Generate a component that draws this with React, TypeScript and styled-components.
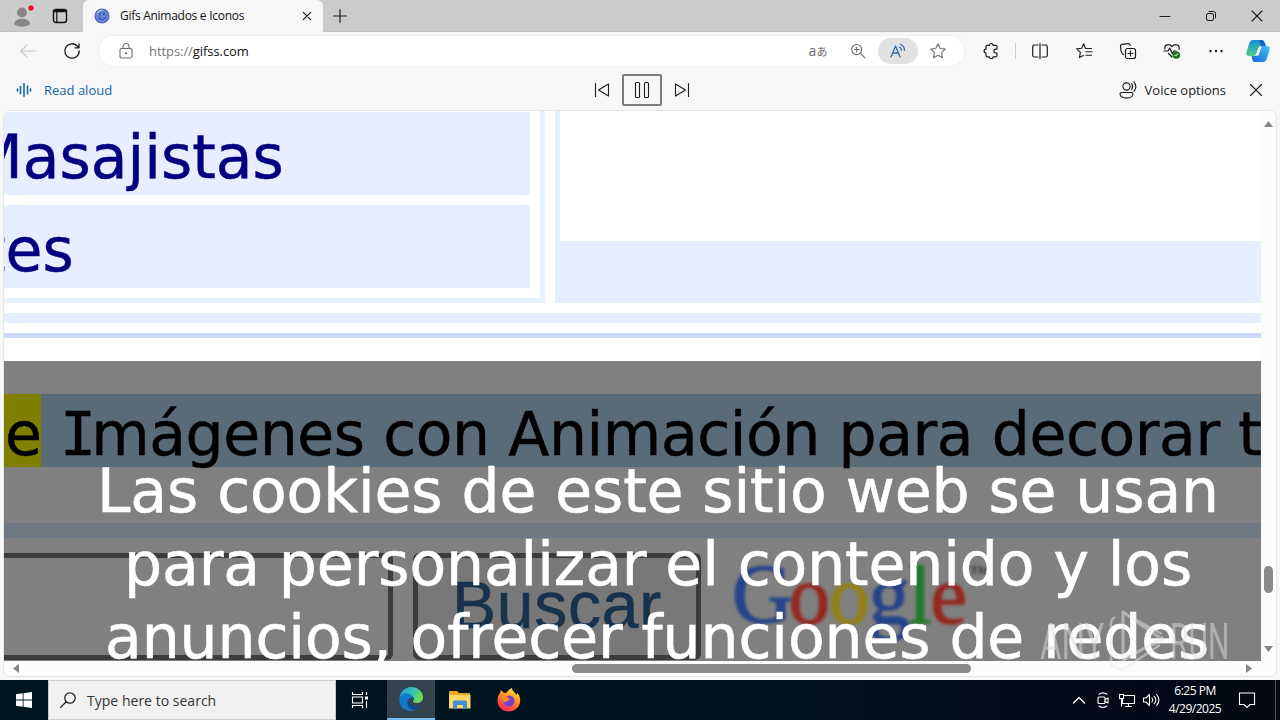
import type { ReactNode } from "react";
import styled, { createGlobalStyle } from "styled-components";

const GlobalStyle = createGlobalStyle`
  html, body {
    margin: 0;
    background: #f7f7f7;
    overflow: hidden;
  }
  * { box-sizing: border-box; }
  svg { display: block; flex: none; overflow: visible; }
`;

const ui = `"Open Sans", "Noto Sans", sans-serif`;
const verdana = `"DejaVu Sans", Verdana, sans-serif`;

const Desktop = styled.div`
  width: 1280px;
  height: 720px;
  display: flex;
  flex-direction: column;
  overflow: hidden;
  background: #f7f7f7;
  font-family: ${ui};
  color: #111;
`;

const Slot = styled.div<{ $w: number }>`
  width: ${(p) => p.$w}px;
  height: 100%;
  display: flex;
  align-items: center;
  justify-content: center;
  flex: none;
`;

const Spacer = styled.div`
  flex: 1;
`;

/* title bar */

const TitleBar = styled.div`
  height: 32px;
  display: flex;
  flex: none;
  background: #cbcbcb;
  border-bottom: 1px solid #c2c2c2;
`;

const Tab = styled.div`
  width: 240px;
  height: 32px;
  padding-left: 11px;
  display: flex;
  align-items: center;
  background: #f7f7f7;
  border-radius: 6px 6px 0 0;
`;

const TabTitle = styled.div`
  margin-left: 10px;
  flex: 1;
  font-size: 12px;
  line-height: 16px;
  letter-spacing: -0.28px;
  white-space: nowrap;
`;

/* toolbar */

const Toolbar = styled.div`
  height: 38px;
  padding-left: 6px;
  display: flex;
  align-items: center;
  flex: none;
`;

const AddressBar = styled.div`
  width: 865px;
  height: 30px;
  margin: 0 5px;
  padding: 0 6px 0 7px;
  display: flex;
  align-items: center;
  background: #fff;
  border-radius: 15px;
  box-shadow: 0 0 2px 1px #f0f0f0;
`;

const Url = styled.div`
  margin-left: 3px;
  font-size: 13px;
  letter-spacing: -0.07px;
  color: #111;
  span {
    color: #757575;
  }
`;

const Translate = styled.div`
  font: 14px/14px ${ui};
  color: #6a6a6a;
  display: flex;
  align-items: baseline;
  span {
    font: 11px/14px "Noto Sans CJK JP", sans-serif;
  }
`;

const Pill = styled.div`
  width: 40px;
  height: 26px;
  border-radius: 13px;
  background: #e1e1e1;
  display: flex;
  align-items: center;
  justify-content: center;
`;

const Divider = styled.div`
  width: 1px;
  height: 16px;
  margin: 0 2px;
  background: #cfcfcf;
`;

/* read aloud bar */

const ReadAloud = styled.div`
  height: 40px;
  display: grid;
  grid-template-columns: 582px 120px 1fr;
  align-items: center;
  flex: none;
`;

const BarGroup = styled.div<{ $end?: boolean }>`
  height: 40px;
  display: flex;
  align-items: center;
  justify-content: ${(p) => (p.$end ? "flex-end" : "flex-start")};
`;

const BarLabel = styled.div<{ $color: string }>`
  font-size: 13px;
  white-space: nowrap;
  color: ${(p) => p.$color};
`;

const PauseButton = styled.div`
  width: 40px;
  height: 32px;
  border: 2px solid #7c7c7c;
  border-radius: 2px;
  display: flex;
  align-items: center;
  justify-content: center;
`;

/* browser viewport */

const Frame = styled.div`
  width: 1274px;
  height: 567px;
  margin-left: 3px;
  display: grid;
  grid-template-columns: 1257px 15px;
  grid-template-rows: 550px 15px;
  border: 1px solid #e6e6e6;
  border-radius: 7px;
  background: #fcfcfc;
  overflow: hidden;
  flex: none;
`;

const Page = styled.div`
  position: relative;
  height: 550px;
  background: #fff;
  overflow: hidden;
  display: flex;
  flex-direction: column;
  font-family: ${verdana};
`;

const Columns = styled.div`
  height: 192px;
  display: flex;
  flex: none;
`;

const Links = styled.div`
  width: 541px;
  padding: 1px 10px 10px 0;
  display: flex;
  flex-direction: column;
  gap: 10px;
  border: solid #e6f0ff;
  border-width: 0 5px 5px 0;
`;

const LinkCell = styled.div<{ $indent: number }>`
  flex: 1;
  background: #e6eeff;
  color: #000080;
  font-size: 60px;
  line-height: 91px;
  text-indent: ${(p) => p.$indent}px;
  -webkit-text-stroke: 0.5px #000080;
  white-space: nowrap;
  overflow: hidden;
`;

const AdBox = styled.div`
  flex: 1;
  margin-left: 10px;
  padding: 0 0 62px 5px;
  background: #e6eeff;
`;

const AdBlank = styled.div`
  height: 130px;
  background: #fff;
`;

const Rule = styled.div<{ $h: number; $top: number; $color: string }>`
  height: ${(p) => p.$h}px;
  margin-top: ${(p) => p.$top}px;
  flex: none;
  background: ${(p) => p.$color};
`;

const Dimmed = styled.div`
  height: 300px;
  margin-top: 23px;
  padding-top: 33px;
  background: #808080;
  flex: none;
`;

const Sentence = styled.div`
  height: 73px;
  display: flex;
  background: #5a6b78;
  color: #000;
  font-size: 60px;
  line-height: 80px;
  white-space: pre;
  -webkit-text-stroke: 0.5px #000;
`;

const Word = styled.div`
  width: 37px;
  padding-left: 1px;
  background: #808000;
`;

const Phrase = styled.div`
  padding-left: 21px;
  letter-spacing: -0.42px;
`;

const SerifI = styled.span`
  font-family: "DejaVu Sans Mono", monospace;
  margin: 0 -3px 0 -2px;
  letter-spacing: -2px;
`;

const SearchForm = styled.div`
  height: 107px;
  margin-top: 15px;
  display: flex;
`;

const Field = styled.div`
  width: 389px;
  height: 107px;
  border: 5px solid #3c3c3c;
  border-left: 0;
  border-radius: 0 6px 6px 0;
`;

const SubmitButton = styled.div`
  width: 288px;
  height: 107px;
  margin-left: 20px;
  border: 5px solid #3c3c3c;
  border-radius: 6px;
  background: #787878;
  color: #17324d;
  font: 66px/95px "Liberation Sans", Arial, sans-serif;
  letter-spacing: 0.8px;
  text-align: center;
  -webkit-text-stroke: 0.6px #17324d;
`;

const Logo = styled.div`
  margin-left: 31px;
  display: flex;
  align-items: baseline;
  line-height: 83px;
  font-family: "Liberation Serif", serif;
  filter: blur(1.7px);
`;

const LogoLetter = styled.span<{ $color: string; $size?: number; $ls?: number }>`
  color: ${(p) => p.$color};
  -webkit-text-stroke: 1.5px ${(p) => p.$color};
  font-size: ${(p) => p.$size ?? 82}px;
  letter-spacing: ${(p) => p.$ls ?? -1}px;
`;

const LogoMark = styled.span`
  margin: -20px 0 0 3px;
  align-self: flex-start;
  color: #404040;
  font: bold 24px/83px "Liberation Sans", sans-serif;
`;

const CookieNotice = styled.div`
  position: absolute;
  left: 0;
  right: 0;
  top: 344px;
  color: #fff;
  font-size: 60px;
  -webkit-text-stroke: 0.6px #fff;
`;

const NoticeLine = styled.div<{ $left: number }>`
  height: 73px;
  line-height: 73px;
  padding-left: ${(p) => p.$left}px;
  letter-spacing: -0.1px;
  white-space: nowrap;
`;

const VScroll = styled.div`
  display: flex;
  flex-direction: column;
  align-items: center;
  padding: 10px 0 9px;
`;

const HScroll = styled.div`
  display: flex;
  align-items: center;
  padding: 0 9px;
`;

const Thumb = styled.div<{ $w: number; $h: number }>`
  width: ${(p) => p.$w}px;
  height: ${(p) => p.$h}px;
  border-radius: 5px;
  background: #8a8a8a;
`;

const Gap = styled.div<{ $size: number }>`
  flex: 0 0 ${(p) => p.$size}px;
`;

const Watermark = styled.div`
  position: absolute;
  left: 1040px;
  top: 608px;
  opacity: 0.5;
`;

/* taskbar */

const Taskbar = styled.div`
  height: 40px;
  margin-top: 3px;
  display: flex;
  flex: none;
  background: linear-gradient(90deg, #001722, #00121f 60%, #040714);
  color: #fff;
`;

const SearchBox = styled.div`
  width: 288px;
  height: 40px;
  padding-left: 11px;
  display: flex;
  align-items: center;
  gap: 11px;
  background: #f1f1f1;
  border: 1px solid #c8c8c8;
  color: #333;
  font-size: 14px;
  letter-spacing: 0.02px;
`;

const ActiveApp = styled.div`
  width: 48px;
  height: 40px;
  margin-left: 3px;
  display: flex;
  align-items: center;
  justify-content: center;
  background: #33444e;
  border-bottom: 2px solid #76b9ed;
`;

const Clock = styled.div`
  width: 64px;
  padding-top: 2px;
  font-size: 12px;
  line-height: 18px;
  letter-spacing: -0.5px;
  text-align: center;
  white-space: nowrap;
`;

const ShowDesktop = styled.div`
  width: 5px;
  height: 40px;
  border-left: 1px solid #4c5660;
`;

type IconProps = {
  w?: number;
  h?: number;
  color?: string;
  sw?: number;
  children: ReactNode;
};

function Icon({ w = 16, h = 16, color = "#1b1b1b", sw = 1.1, children }: IconProps) {
  return (
    <svg
      width={w}
      height={h}
      viewBox={`0 0 ${w} ${h}`}
      fill="none"
      stroke={color}
      strokeWidth={sw}
      strokeLinecap="round"
      strokeLinejoin="round"
    >
      {children}
    </svg>
  );
}

function Arrow({ d, w, h }: { d: string; w: number; h: number }) {
  return (
    <svg width={w} height={h}>
      <path d={d} fill="#858585" />
    </svg>
  );
}

function BrowserTitle() {
  return (
    <TitleBar>
      <Slot $w={44}>
        <Icon w={24} h={24}>
          <circle cx="12" cy="12" r="11" fill="#d0cecd" stroke="none" />
          <circle cx="12" cy="8.5" r="5" fill="#898785" stroke="none" />
          <path d="M4 20c0-7 16-7 16 0-4 3.500-12 3.500-16 0z" fill="#898785" stroke="none" />
          <circle cx="21" cy="4" r="3.300" fill="#e81123" stroke="#d8d8d8" />
        </Icon>
      </Slot>
      <Slot $w={32}>
        <Icon sw={1.4} color="#111">
          <rect x="1.500" y="1.500" width="13" height="13" rx="2.500" />
          <path d="M2 3h12" strokeWidth="2.600" />
          <path d="M4.800 4v10" strokeWidth="1.200" />
        </Icon>
      </Slot>
      <Gap $size={7} />
      <Tab>
        <Icon color="#2b3f9a">
          <circle cx="8" cy="8" r="7" fill="#6686d4" stroke="#4a5fae" />
          <path d="M5.800 5v2M10 5v2M4.500 9.500c2 3 5 3 7 0" />
          <path d="M3.500 5c1-2 3-3 5-3" stroke="#b8cbf5" />
        </Icon>
        <TabTitle>Gifs Animados e Iconos</TabTitle>
        <Slot $w={32}>
          <Icon w={8} h={8} sw={1.2}>
            <path d="M.300.300l7.400 7.400M7.700.300L.300 7.700" />
          </Icon>
        </Slot>
      </Tab>
      <Slot $w={34}>
        <Icon w={14} h={14} sw={1.2}>
          <path d="M7 .500v13M.500 7h13" />
        </Icon>
      </Slot>
      <Spacer />
      <Slot $w={46}>
        <Icon w={10} h={10} sw={1}>
          <path d="M0 5.500h10" />
        </Icon>
      </Slot>
      <Slot $w={46}>
        <Icon w={10} h={10} sw={1}>
          <rect x=".500" y="2.500" width="7" height="7" rx="1.500" />
          <path d="M3 .500h4.500a2 2 0 0 1 2 2V7" />
        </Icon>
      </Slot>
      <Slot $w={46}>
        <Icon w={10} h={10} sw={1.1}>
          <path d="M0 0l10 10M10 0L0 10" />
        </Icon>
      </Slot>
    </TitleBar>
  );
}

function BrowserToolbar() {
  return (
    <Toolbar>
      <Slot $w={44}>
        <Icon color="#c9c9c9">
          <path d="M15.500 8H.800M7 1.800L.800 8 7 14.200" />
        </Icon>
      </Slot>
      <Slot $w={44}>
        <Icon sw={1.3}>
          <path d="M15.200 8a7.200 7.200 0 1 1-2-5l1.500 1.600M15 .800v4h-4" />
        </Icon>
      </Slot>
      <AddressBar>
        <Slot $w={40}>
          <Icon color="#6e6e6e">
            <rect x="2" y="5.500" width="12" height="9.500" rx="1.500" />
            <path d="M5 5.500V3.500a3 3 0 0 1 6 0v2" />
            <circle cx="8" cy="10.300" r=".600" fill="#6e6e6e" />
          </Icon>
        </Slot>
        <Url>
          <span>https://</span>gifss.com
        </Url>
        <Spacer />
        <Slot $w={40}>
          <Translate>
            a<span>あ</span>
          </Translate>
        </Slot>
        <Slot $w={40}>
          <Icon color="#6e6e6e">
            <circle cx="6.700" cy="6.500" r="5" />
            <path d="M10.500 10.300l4.500 4.500M6.700 4v5M4.200 6.500h5" />
          </Icon>
        </Slot>
        <Pill>
          <Icon color="#2a6cae" sw={1.3}>
            <path d="M1 14L5.500 3 10 14M2.600 10h5.800" />
            <path d="M9.500 4.200c1.200.600 1.900 1.700 1.900 3M10.500 1.500c2.500 1 4 3.200 4 5.800" />
          </Icon>
        </Pill>
        <Slot $w={40}>
          <Icon color="#6e6e6e">
            <path d="M8 .800l2.200 4.700 5.100.600-3.800 3.500 1 5.100L8 12.200l-4.500 2.500 1-5.100L.700 6.100l5.100-.600z" />
          </Icon>
        </Slot>
      </AddressBar>
      <Slot $w={44}>
        <Icon sw={1.2}>
          <path d="M4.500 2.300h2a1.800 1.800 0 0 1 3.600 0h2.400q1.500 0 1.500 1.500v2.400h-1.200a1.900 1.900 0 0 0 0 3.800H14v2.400q0 1.500-1.500 1.500h-2.400a1.800 1.800 0 0 1-3.600 0h-2Q3 13.900 3 12.400V10a1.900 1.900 0 0 1 0-3.800V3.800q0-1.500 1.500-1.500z" />
        </Icon>
      </Slot>
      <Divider />
      <Slot $w={44}>
        <Icon sw={1.2}>
          <path d="M6 2H2.500Q.700 2 .700 3.800v8.400Q.700 14 2.500 14H6M10 2h3.500q1.800 0 1.800 1.800v8.400q0 1.800-1.800 1.800H10M8 .500v15" />
        </Icon>
      </Slot>
      <Slot $w={44}>
        <Icon sw={1.1}>
          <path d="M9.500 5.500L7.700.800 5.700 5.300l-5 .600 3.700 3.500-1 5.200 4-2.200M9.500 5.500H15.500M10 8.800h6M10 12.200h5.500" />
        </Icon>
      </Slot>
      <Slot $w={44}>
        <Icon sw={1.2}>
          <rect x="5.500" y="5.500" width="10" height="10" rx="2" />
          <path d="M10.500 8v5M8 10.500h5M3.500 11.500L2.600 11Q1 9 .800 7L.500 3Q.500 1.500 2 1.300L8 .600q1.800-.200 2.200 1.800" />
        </Icon>
      </Slot>
      <Slot $w={44}>
        <Icon sw={1.2}>
          <path d="M8 14L4.500 10.500M1 6C-.200 2 5 0 8 3.500 11 0 16.500 2 15 6.500M0 8h4l1.700-3 2.600 5.500L10 8h2" />
          <circle cx="12.300" cy="12" r="3.800" fill="#187a1b" stroke="none" />
          <path d="M10.700 12l1 1.100 2.200-2.300" stroke="#fff" strokeWidth="1" />
        </Icon>
      </Slot>
      <Slot $w={44}>
        <Icon>
          <g fill="#1b1b1b" stroke="none">
            <circle cx="2.500" cy="8" r="1.200" />
            <circle cx="8" cy="8" r="1.200" />
            <circle cx="13.500" cy="8" r="1.200" />
          </g>
        </Icon>
      </Slot>
      <Slot $w={40}>
        <CopilotLogo />
      </Slot>
    </Toolbar>
  );
}

function CopilotLogo() {
  return (
    <svg width="24" height="22" viewBox="0 0 24 22">
      <defs>
        <linearGradient id="cpA" x1="0" y1="0" x2="0" y2="1">
          <stop offset="0" stopColor="#1a8ed8" />
          <stop offset="1" stopColor="#53d08c" />
        </linearGradient>
        <linearGradient id="cpB" x1="1" y1="0" x2="0" y2="1">
          <stop offset="0" stopColor="#3cc8f2" />
          <stop offset="1" stopColor="#1a63e0" />
        </linearGradient>
      </defs>
      <path d="M7 0h8q2 0 2.700 2.500L18.500 6H15q-2 0-2.700 2l-2 6q-.800 2-2.800 2H3Q-.500 16 .500 12L3 4Q4 0 7 0z" fill="url(#cpA)" />
      <path d="M13 0h3q2 0 2.700 2.500L20 6h-5z" fill="#1661be" />
      <path d="M17 22H9q-2 0-2.700-2.500L5.500 16H9q2 0 2.700-2l2-6q.800-2 2.800-2H21q3.500 0 2.500 4L21 18q-1 4-4 4z" fill="url(#cpB)" />
      <path d="M13.500 7h2l-3 8.500h-3z" fill="#f2f8fb" />
    </svg>
  );
}

function ReadAloudBar() {
  return (
    <ReadAloud>
      <BarGroup>
        <Gap $size={4} />
        <Slot $w={40}>
          <Icon color="#1464a5" sw={1.6}>
            <path d="M1.500 7v2M4.500 4.500v7M8 1.800v12.400M11.500 4v8M14.500 7v2" />
          </Icon>
        </Slot>
        <BarLabel $color="#1464a5">Read aloud</BarLabel>
      </BarGroup>
      <BarGroup>
        <Slot $w={40}>
          <Icon>
            <path d="M1.500 1.500v13M14.500 2v12L4.500 8z" />
          </Icon>
        </Slot>
        <PauseButton>
          <Icon>
            <rect x="1.500" y=".500" width="4" height="15" rx="1" />
            <rect x="10.500" y=".500" width="4" height="15" rx="1" />
          </Icon>
        </PauseButton>
        <Slot $w={40}>
          <Icon>
            <path d="M14.500 1.500v13M1.500 2v12l10-6z" />
          </Icon>
        </Slot>
      </BarGroup>
      <BarGroup $end>
        <Icon w={18} h={18}>
          <circle cx="7.500" cy="5.500" r="3.600" />
          <path d="M2.500 11.500h10q1.500 0 1.500 1.500c0 5.500-13 5.500-13 0q0-1.500 1.500-1.500zM12.700 2.500c1.300 2 1.300 4 0 6M15 .800c2.300 3 2.300 6.500 0 9.500" />
        </Icon>
        <Gap $size={8} />
        <BarLabel $color="#222">Voice options</BarLabel>
        <Gap $size={6} />
        <Slot $w={48}>
          <Icon w={12} h={12}>
            <path d="M.500.500l11 11M11.500.500l-11 11" />
          </Icon>
        </Slot>
      </BarGroup>
    </ReadAloud>
  );
}

const notice = [
  { text: "Las cookies de este sitio web se usan", left: 93 },
  { text: "para personalizar el contenido y los", left: 120 },
  { text: "anuncios, ofrecer funciones de redes", left: 101 },
];

function WebPage() {
  return (
    <Page>
      <Columns>
        <Links>
          <LinkCell $indent={-33}>Masajistas</LinkCell>
          <LinkCell $indent={-22}>tes</LinkCell>
        </Links>
        <AdBox>
          <AdBlank />
        </AdBox>
      </Columns>
      <Rule $h={10} $top={10} $color="#e6eeff" />
      <Rule $h={5} $top={10} $color="#ccd9fa" />
      <Dimmed>
        <Sentence>
          <Word>e</Word>
          <Phrase>
            <SerifI>I</SerifI>mágenes con Animación para decorar tu
          </Phrase>
        </Sentence>
        <Rule $h={15} $top={56} $color="#6f7883" />
        <SearchForm>
          <Field />
          <SubmitButton>Buscar</SubmitButton>
          <Logo>
            <LogoLetter $color="#24438a" $size={84} $ls={-4}>G</LogoLetter>
            <LogoLetter $color="#93291f">o</LogoLetter>
            <LogoLetter $color="#94801a">o</LogoLetter>
            <LogoLetter $color="#24438a">g</LogoLetter>
            <LogoLetter $color="#1f7a2b">l</LogoLetter>
            <LogoLetter $color="#93291f">e</LogoLetter>
            <LogoMark>™</LogoMark>
          </Logo>
        </SearchForm>
      </Dimmed>
      <CookieNotice>
        {notice.map((line) => (
          <NoticeLine key={line.text} $left={line.left}>
            {line.text}
          </NoticeLine>
        ))}
      </CookieNotice>
    </Page>
  );
}

function AnyRun() {
  return (
    <Watermark>
      <svg width="195" height="66" viewBox="0 0 195 66" fill="#dedede">
        <g fontFamily="Roboto, sans-serif" fontSize="50" fontWeight="400">
          <text transform="translate(0 51) scale(0.66 1)">ANY</text>
          <text transform="translate(130 51) scale(0.6 1)">RUN</text>
        </g>
        <g fill="none" stroke="#e8e8e8" strokeWidth="3" strokeLinejoin="round">
          <path d="M83 4v46l40-18z" />
          <path d="M75 9q-4 2-4 7v41l11 5 38-25M82 4l40 22M81 54l42-25" strokeWidth="2.500" />
        </g>
      </svg>
    </Watermark>
  );
}

function WindowsTaskbar() {
  return (
    <Taskbar>
      <Slot $w={48}>
        <Icon>
          <path
            d="M0 2.300l6.700-1v6.200H0zM7.500 1.200L16 0v7.500H7.500zM0 8.400h6.700v6.300L0 13.700zM7.500 8.400H16V16l-8.500-1.200z"
            fill="#fff"
            stroke="none"
          />
        </Icon>
      </Slot>
      <SearchBox>
        <Icon color="#222" sw={1.3}>
          <circle cx="10" cy="6" r="5.200" />
          <path d="M6.200 9.800L.600 15.400" />
        </Icon>
        Type here to search
      </SearchBox>
      <Slot $w={48}>
        <Icon color="#fff" sw={1.1}>
          <path d="M.500 0v2.500h10V0M.500 16v-2.500h10V16M.500 5h10v6H.500zM14.500 0v3M14.500 9v7" strokeLinecap="butt" strokeLinejoin="miter" />
          <path d="M14.500 4.500v3" strokeWidth="3" strokeLinecap="butt" />
        </Icon>
      </Slot>
      <ActiveApp>
        <svg width="24" height="24" viewBox="0 0 24 24">
          <defs>
            <linearGradient id="edgeTop" x1="0" y1="0" x2="1" y2="0.300">
              <stop offset="0" stopColor="#239bd8" />
              <stop offset="0.600" stopColor="#35c1b5" />
              <stop offset="1" stopColor="#6bdd54" />
            </linearGradient>
          </defs>
          <path d="M.500 11C1 5 6 0 12 0c7 0 12 5 12 10 0 4-3 6-6.500 6-2.500 0-4-1-3.500-2 2.500-3-.500-6-4-6C5 8 1 9 .500 11z" fill="url(#edgeTop)" />
          <path d="M.200 12C.500 8 4.500 5.500 9 6.500c3 .700 5 3 5.300 5C11 9.500 8.500 12 9 15.500c.500 4.500 5 6.500 9.500 5.500-2 2-4 3-6.500 3C5 24 0 19 .200 12z" fill="#1478cf" />
          <path d="M8.700 12.500C7 18 11 23 15.500 23c2.500-.500 5-2.500 6.500-5-5 2.500-12 1-13.300-5.500z" fill="#114a8b" />
        </svg>
      </ActiveApp>
      <Gap $size={1} />
      <Slot $w={48}>
        <svg width="22" height="20" viewBox="0 0 22 20">
          <path d="M0 1h8l2 2h11v15H0z" fill="#e9a823" />
          <path d="M0 5h21.500v13.500H0z" fill="#ffd766" />
          <path d="M4 19v-7q0-1.500 1.500-1.500h11q1.500 0 1.500 1.500v7h-4v-4H8v4z" fill="#3f8fd2" />
        </svg>
      </Slot>
      <Gap $size={1} />
      <Slot $w={48}>
        <svg width="24" height="24" viewBox="0 0 24 24">
          <defs>
            <linearGradient id="fox" x1="0.800" y1="0" x2="0.300" y2="1">
              <stop offset="0" stopColor="#ffe94a" />
              <stop offset="0.400" stopColor="#ff9a1f" />
              <stop offset="1" stopColor="#f5225c" />
            </linearGradient>
          </defs>
          <path d="M3 5l1-3 3 3 3-.500C11 2 13 1 15 0c0 3 3 4 4.500 7l1-2C24 9 24 15 21 19c-5 6-14 6-18.500 0C-.500 15 0 8 3 5z" fill="url(#fox)" />
          <circle cx="12" cy="13" r="5.500" fill="#7a3fd0" />
          <path d="M5 8c3-1 5 0 6 2l2 1c-1 2-3 1.500-4 3-2 0-4-2-4-6z" fill="#ff8a1e" />
        </svg>
      </Slot>
      <Spacer />
      <Slot $w={24}>
        <Icon w={12} h={8} color="#fff" sw={1.3}>
          <path d="M.500 7L6 1.500 11.500 7" />
        </Icon>
      </Slot>
      <Slot $w={24}>
        <Icon color="#fff">
          <rect x="3" y="5" width="7" height="6.500" rx="1" />
          <path d="M10 7.500l3-1.500v5L10 9.500M4 2.300c2.500-1.800 5.500-1.800 8 0M4 14c2.500 1.800 5.500 1.800 8 0" />
        </Icon>
      </Slot>
      <Slot $w={24}>
        <Icon color="#fff">
          <path d="M5 3.500h10.500v8H3.500V7M9.500 11.500V14M6.500 14.500h6M.500 2.500h4v4h-4zM2.500 6.500V14" />
        </Icon>
      </Slot>
      <Slot $w={24}>
        <Icon color="#fff">
          <path d="M.500 6H3l3.500-3.500v11L3 10H.500zM9 6c1 1.300 1 2.700 0 4M11.300 4.300c2 2.300 2 5.100 0 7.400M13.600 2.500c3 3.500 3 7.500 0 11" />
        </Icon>
      </Slot>
      <Clock>
        6:25 PM
        <br />
        4/29/2025
      </Clock>
      <Slot $w={40}>
        <Icon color="#fff">
          <path d="M.500 1h15v11.500H11L8 15.500 5 12.500H.500z" strokeLinejoin="miter" />
        </Icon>
      </Slot>
      <Gap $size={8} />
      <ShowDesktop />
    </Taskbar>
  );
}

export default function App() {
  return (
    <Desktop>
      <GlobalStyle />
      <BrowserTitle />
      <BrowserToolbar />
      <ReadAloudBar />
      <Frame>
        <WebPage />
        <VScroll>
          <Arrow w={9} h={6} d="M0 6L4.500 0 9 6z" />
          <Spacer />
          <Thumb $w={9} $h={27} />
          <Gap $size={53} />
          <Arrow w={9} h={6} d="M0 0h9L4.500 6z" />
        </VScroll>
        <HScroll>
          <Arrow w={6} h={9} d="M6 0v9L0 4.500z" />
          <Gap $size={553} />
          <Thumb $w={399} $h={9} />
          <Spacer />
          <Arrow w={6} h={9} d="M0 0l6 4.500L0 9z" />
        </HScroll>
      </Frame>
      <WindowsTaskbar />
      <AnyRun />
    </Desktop>
  );
}
